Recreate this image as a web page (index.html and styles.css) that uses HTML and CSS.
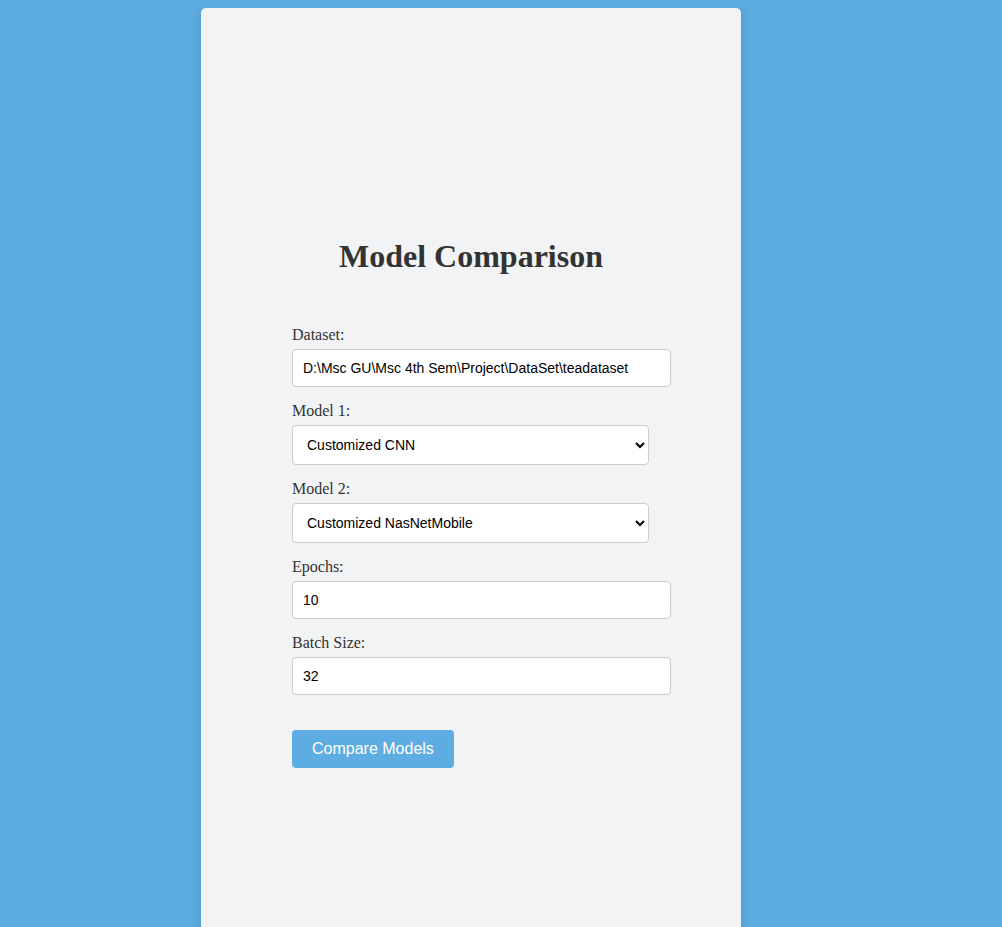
FILE: index.html
```html
<!DOCTYPE html>
<html lang="en">
<head>
<meta charset="utf-8">
<title>Model Comparison</title>
<link rel="stylesheet" href="styles.css">
</head>
<body>
<div class="card">
  <h1 class="title">Model Comparison</h1>
  <form class="form">
    <label class="label" for="dataset">Dataset:</label>
    <input class="field" id="dataset" type="text" value="D:\Msc GU\Msc 4th Sem\Project\DataSet\teadataset">
    <label class="label" for="model1">Model 1:</label>
    <select class="field select" id="model1">
      <option>Customized CNN</option>
      <option>Customized NasNetMobile</option>
    </select>
    <label class="label" for="model2">Model 2:</label>
    <select class="field select" id="model2">
      <option>Customized CNN</option>
      <option selected>Customized NasNetMobile</option>
    </select>
    <label class="label" for="epochs">Epochs:</label>
    <input class="field" id="epochs" type="number" value="10">
    <label class="label" for="batch">Batch Size:</label>
    <input class="field" id="batch" type="number" value="32">
    <div class="actions">
      <button class="btn" type="button">Compare Models</button>
    </div>
  </form>
</div>
</body>
</html>
```
FILE: styles.css
```css
html {
  overflow: hidden;
}
body {
  margin: 8px 0 0 0;
  background: #5dade2;
  font-family: "Liberation Serif", "Times New Roman", serif;
  color: #333;
}
.card {
  width: 540px;
  min-height: 990px;
  margin-left: 201px;
  box-sizing: border-box;
  background: #f2f3f5;
  border-radius: 5px;
  box-shadow: 0 0 14px rgba(0, 0, 0, 0.12);
  display: flex;
  flex-direction: column;
  justify-content: center;
}
.title {
  margin: 0 0 50px 0;
  font-size: 32px;
  font-weight: bold;
  color: #333;
  line-height: normal;
  text-align: center;
}
.form {
  width: 357px;
  margin-left: 91px;
  display: flex;
  flex-direction: column;
  align-items: flex-start;
}
.label {
  display: block;
  font-size: 16px;
  line-height: 18px;
  padding-top: 1px;
  margin-bottom: 5px;
  color: #333;
}
.field {
  font-family: "Liberation Sans", Arial, sans-serif;
  font-size: 14px;
  color: #000;
  background: #fff;
  border: 1px solid #ccc;
  border-radius: 4px;
  margin: 0 0 14px 0;
  outline: none;
}
input.field {
  box-sizing: border-box;
  width: 379px;
  height: 38px;
  padding: 0 10px;
}
input[type=number]::-webkit-inner-spin-button,
input[type=number]::-webkit-outer-spin-button {
  -webkit-appearance: none;
  margin: 0;
}
.select {
  box-sizing: border-box;
  width: 357px;
  height: 40px;
  padding: 0 10px;
}
.actions {
  margin-top: 21px;
}
.btn {
  height: 38px;
  background: #5dade2;
  color: #fff;
  border: none;
  border-radius: 4px;
  font-family: "Liberation Sans", Arial, sans-serif;
  font-size: 16px;
  padding: 0 20px;
  white-space: nowrap;
}
```
